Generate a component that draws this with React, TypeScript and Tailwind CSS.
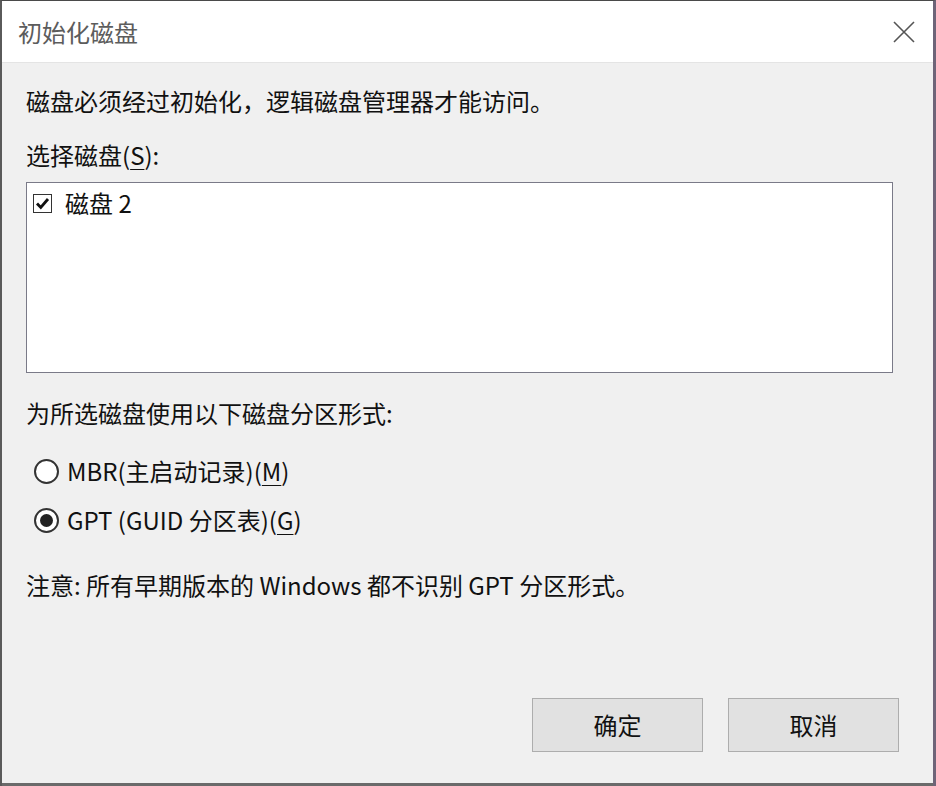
import React from "react";

const font = { fontFamily: '"Noto Sans CJK SC", "Noto Sans", sans-serif' };

export default function App() {
  return (
    <div
      className="w-[936px] h-[786px] bg-[#f0f0f0] flex flex-col border-l-2 border-l-[#5a5a5a] border-r-[3px] border-r-[#6e6478] border-t border-t-[#4a4a4a] text-[#111]"
      style={font}
    >
      <div className="h-[62px] bg-white border-b border-[#e4e4e4] flex items-center justify-between pl-[16px] pr-[17px] shrink-0">
        <span className="text-[24px] text-[#5c5c5c] leading-none">初始化磁盘</span>
        <svg width="24" height="24" viewBox="0 0 24 24">
          <path d="M2 2 L22 22 M22 2 L2 22" stroke="#555" strokeWidth="1.6" fill="none" />
        </svg>
      </div>
      <div className="flex flex-col pl-[24px] pr-[40px] flex-1">
        <div className="mt-[22px] h-[32px] flex items-center text-[24px] leading-none">
          磁盘必须经过初始化，逻辑磁盘管理器才能访问。
        </div>
        <div className="mt-[22px] h-[32px] flex items-center text-[24px] leading-none">
          选择磁盘(<span className="underline underline-offset-[4px] decoration-1">S</span>):
        </div>
        <div className="mt-[11px] w-[867px] h-[191px] bg-white border border-[#7a7a88] pt-[9px] pl-[6px]">
          <div className="flex items-center h-[22px]">
            <div className="w-[19px] h-[19px] border border-[#333] bg-white flex items-center justify-center">
              <svg width="15" height="15" viewBox="0 0 15 15">
                <path d="M2 7.5 L5.8 11.5 L13 3" stroke="#111" strokeWidth="2.8" fill="none" />
              </svg>
            </div>
            <span className="ml-[13px] text-[24px] leading-none">磁盘 2</span>
          </div>
        </div>
        <div className="mt-[24px] h-[32px] flex items-center text-[24px] leading-none">
          为所选磁盘使用以下磁盘分区形式:
        </div>
        <div className="mt-[26px] h-[32px] flex items-center pl-[8px]">
          <div className="w-[25px] h-[25px] rounded-full border-2 border-[#333] bg-white" />
          <span className="ml-[8px] text-[24px] leading-none">
            MBR(主启动记录)(<span className="underline underline-offset-[4px] decoration-1">M</span>)
          </span>
        </div>
        <div className="mt-[17px] h-[32px] flex items-center pl-[8px]">
          <div className="w-[25px] h-[25px] rounded-full border-2 border-[#333] bg-white flex items-center justify-center">
            <div className="w-[13px] h-[13px] rounded-full bg-[#222]" />
          </div>
          <span className="ml-[8px] text-[24px] leading-none">
            GPT (GUID 分区表)(<span className="underline underline-offset-[4px] decoration-1">G</span>)
          </span>
        </div>
        <div className="mt-[33px] h-[32px] flex items-center text-[24px] leading-none">
          注意: 所有早期版本的 Windows 都不识别 GPT 分区形式。
        </div>
        <div className="mt-[97px] flex justify-end gap-[25px] mr-[-6px]">
          <button className="w-[171px] h-[54px] bg-[#e1e1e1] border border-[#adadad] text-[24px] text-[#111]" style={font}>
            确定
          </button>
          <button className="w-[171px] h-[54px] bg-[#e1e1e1] border border-[#adadad] text-[24px] text-[#111]" style={font}>
            取消
          </button>
        </div>
      </div>
      <div className="h-[3px] bg-[#6a6a6a] shrink-0" />
    </div>
  );
}
